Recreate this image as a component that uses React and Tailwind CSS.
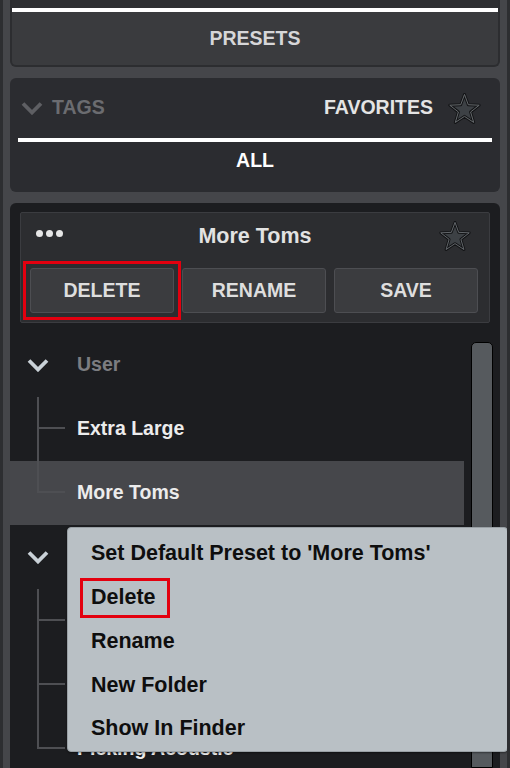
import React from "react";

function Star({ className }) {
  const pts =
    "17,1.5 20.9,12.1 32.2,12.6 23.3,19.6 26.5,30.4 17,24.1 7.5,30.4 10.7,19.6 1.8,12.6 13.1,12.1";
  return (
    <svg viewBox="0 0 34 32" className={className}>
      <polygon points={pts} fill="#3d4145" stroke="#121315" strokeWidth="3" strokeLinejoin="round" />
      <polygon points={pts} fill="none" stroke="#686c70" strokeWidth="1" strokeLinejoin="round" />
    </svg>
  );
}

function Chevron({ color, className }) {
  return (
    <svg viewBox="0 0 22 14" className={className}>
      <path d="M2 2.5 L11 11.5 L20 2.5" fill="none" stroke={color} strokeWidth="3.8" />
    </svg>
  );
}

function FolderRow({ name }) {
  return (
    <div className="h-[64px] shrink-0 flex items-center">
      <div className="w-[67px] pl-[17px] flex items-center">
        <Chevron color="#c9d1d7" className="w-[22px] h-[14px]" />
      </div>
      {name && <span className="text-[19.5px] text-[#7c7d81]">{name}</span>}
    </div>
  );
}

function ChildRow({ name, last, hl }) {
  return (
    <div className={`h-[64px] shrink-0 flex items-center ${hl ? "bg-[#46474b]" : ""}`}>
      <div className="ml-[27px] w-[28px] self-stretch flex flex-col">
        <div className="h-1/2 border-l-2 border-b-2 border-[#4e4f53]" />
        {!last && <div className="h-1/2 border-l-2 border-[#4e4f53]" />}
      </div>
      {name && <span className="ml-[12px] text-[19.5px] text-[#ececec]">{name}</span>}
    </div>
  );
}

export default function App() {
  return (
    <div className="w-[510px] h-[768px] overflow-hidden relative bg-[#45464a] border-l-[3px] border-r-[3px] border-[#2d2e31] pl-[7px] pr-[7px] flex flex-col font-['Liberation_Sans',Arial,sans-serif] font-bold leading-none">
      {/* Presets panel */}
      <div className="shrink-0 h-[67px] bg-[#3a3b3e] border-x-2 border-b-2 border-[#2c2d30] rounded-b-[6px] flex flex-col">
        <div className="h-[8px] bg-[#2e2f32]" />
        <div className="h-[4px] bg-white" />
        <div className="flex-1 flex items-center justify-center pt-[1px] text-[19.5px] text-[#d6d6d8]">PRESETS</div>
      </div>

      {/* Tags panel */}
      <div className="mt-[11px] shrink-0 h-[114px] bg-[#2b2c30] rounded-[6px] flex flex-col">
        <div className="h-[60px] flex items-center pl-[11px] pr-[19px] text-[19.5px]">
          <Chevron color="#5e5f63" className="w-[22px] h-[14px]" />
          <span className="ml-[9px] text-[#6b6c70]">TAGS</span>
          <span className="ml-auto text-[#e4e4e4]">FAVORITES</span>
          <Star className="ml-[15px] w-[33px] h-[31px]" />
        </div>
        <div className="mx-[8px] h-[4px] bg-white" />
        <div className="h-[38px] flex items-center justify-center text-[19.5px] text-white">ALL</div>
      </div>

      {/* Preset browser panel */}
      <div className="mt-[11px] flex-1 min-h-0 bg-[#1c1d20] rounded-t-[6px] flex flex-col">
        <div className="mx-[10px] mt-[9px] h-[111px] shrink-0 bg-[#2c2d30] border border-[#3b3c40] rounded-[2px] flex flex-col">
          <div className="h-[46px] grid grid-cols-[1fr_auto_1fr] items-center">
            <div className="pl-[15px] flex gap-[3px] -mt-[6px]">
              <div className="w-[7px] h-[7px] rounded-full bg-[#e6e6e6]" />
              <div className="w-[7px] h-[7px] rounded-full bg-[#e6e6e6]" />
              <div className="w-[7px] h-[7px] rounded-full bg-[#e6e6e6]" />
            </div>
            <span className="text-[21.5px] text-[#e2e2e2] pt-[2px]">More Toms</span>
            <div className="pr-[18px] flex justify-end">
              <Star className="w-[32px] h-[30px]" />
            </div>
          </div>
          <div className="mt-[9px] h-[45px] pl-[9px] pr-[11px] grid grid-cols-3 gap-[8px] text-[19.5px] text-[#dedede]">
            <div className="-m-[7px] p-[4px] border-[3px] border-[#e3000f] flex">
              <div className="flex-1 bg-[#3b3c3f] border border-[#4d4e52] rounded-[3px] flex items-center justify-center">
                DELETE
              </div>
            </div>
            <div className="bg-[#3b3c3f] border border-[#4d4e52] rounded-[3px] flex items-center justify-center">
              RENAME
            </div>
            <div className="bg-[#3b3c3f] border border-[#4d4e52] rounded-[3px] flex items-center justify-center">
              SAVE
            </div>
          </div>
        </div>

        <div className="mt-[10px] flex flex-1 min-h-0">
          <div className="w-[454px] flex flex-col">
            <FolderRow name="User" />
            <ChildRow name="Extra Large" />
            <ChildRow name="More Toms" last hl />
            <FolderRow />
            <ChildRow />
            <ChildRow />
            <ChildRow name="Picking Acoustic" last />
          </div>
          <div className="ml-[7px] mt-[9px] w-[22px] bg-[#565a5e] border border-black rounded-t-[5px]" />
        </div>
      </div>

      {/* Context menu */}
      <div className="absolute left-[64px] top-[527px] w-[441px] h-[225px] bg-[#b9c0c5] border border-[#99a0a5] rounded-[4px] pt-[4px] flex flex-col text-[21.5px] text-[#0e0e0e] shadow-[0_1px_2px_rgba(0,0,0,0.4)]">
        <div className="h-[44px] flex items-center pl-[23px]">Set Default Preset to 'More Toms'</div>
        <div className="h-[44px] flex items-center pl-[23px]">
          <span className="-ml-[11px] h-[40px] pl-[8px] pr-[11px] border-[3px] border-[#e3000f] flex items-center">
            Delete
          </span>
        </div>
        <div className="h-[44px] flex items-center pl-[23px]">Rename</div>
        <div className="h-[44px] flex items-center pl-[23px]">New Folder</div>
        <div className="h-[44px] flex items-center pl-[23px]">Show In Finder</div>
      </div>
    </div>
  );
}
